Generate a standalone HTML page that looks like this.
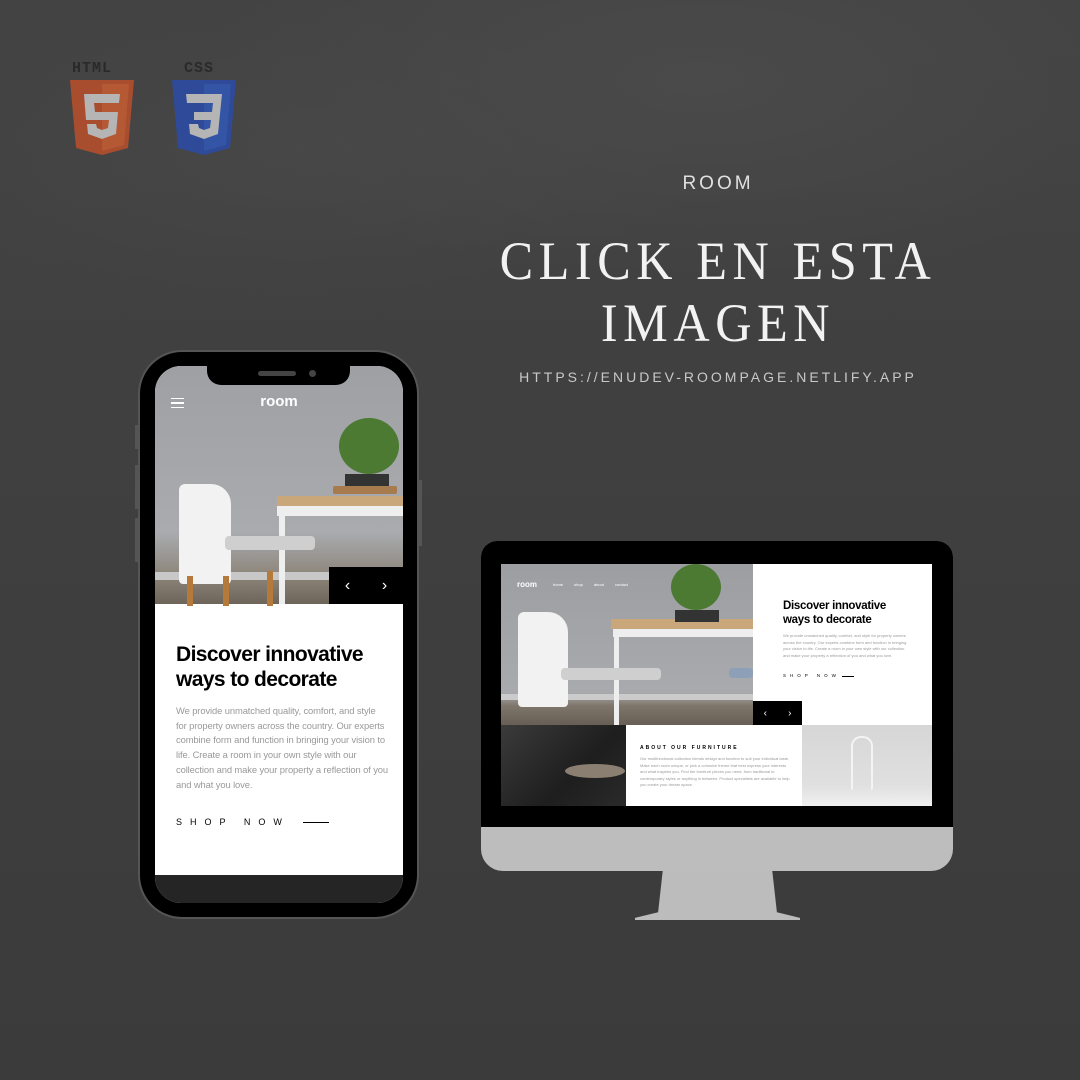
<!DOCTYPE html>
<html><head><meta charset="utf-8"><style>
*{margin:0;padding:0;box-sizing:border-box}
body{width:1080px;height:1080px;overflow:hidden;background:#3e3e3e;font-family:"Liberation Sans",sans-serif;position:relative}
.bg{position:absolute;inset:0;background:radial-gradient(ellipse 500px 200px at 700px 80px,#4a4a4a,transparent),radial-gradient(ellipse 400px 150px at 300px 150px,#474747,transparent),linear-gradient(#434343,#3b3b3b)}
.a{position:absolute}
.t{color:#eee;text-align:center;position:absolute}
</style></head><body>
<div class="bg"></div>
<!-- logos -->
<div class="a" style="left:72px;top:60px;font:bold 15px 'Liberation Mono',monospace;color:#2a2a2a;letter-spacing:1px">HTML</div>
<div class="a" style="left:184px;top:60px;font:bold 15px 'Liberation Mono',monospace;color:#2a2a2a;letter-spacing:1px">CSS</div>
<svg class="a" style="left:68px;top:78px" width="68" height="78" viewBox="0 0 68 78"><path d="M2 2H66L60 70 34 77 8 70Z" fill="#a84e2e"/><path d="M34 6H61L56 67 34 73Z" fill="#b55834"/><path d="M16 16H52L51 25H26L27 34H50L48 56 34 61 20 56 19 46H28L29 50 34 52 40 50 41 42H18Z" fill="#b5b5b5"/></svg>
<svg class="a" style="left:170px;top:78px" width="68" height="78" viewBox="0 0 68 78"><path d="M2 2H66L60 70 34 77 8 70Z" fill="#2f4a98"/><path d="M34 6H61L56 67 34 73Z" fill="#3454a5"/><path d="M16 16H52L48 56 34 61 20 56 19 46H28L29 50 34 52 40 50 41 42H24V34H42L43 25H17Z" fill="#b5b5b5"/></svg>
<!-- titles -->
<div class="t" style="left:540px;width:356px;top:173px;font-size:19px;letter-spacing:3px;color:#e0e0e0">ROOM</div>
<div class="t" style="left:440px;width:556px;top:230px;font:54px/62px 'Liberation Serif',serif;letter-spacing:6px;color:#f2f2f2;transform:scaleX(.93)">CLICK EN ESTA<br>IMAGEN</div>
<div class="t" style="left:440px;width:556px;top:369px;font-size:14px;letter-spacing:3px;color:#c8c8c8">HTTPS://ENUDEV-ROOMPAGE.NETLIFY.APP</div>
<!-- phone -->
<div class="a" style="left:138px;top:350px;width:281px;height:569px;background:#000;border-radius:44px;border:2px solid #555"></div>
<div class="a" style="left:135px;top:425px;width:4px;height:24px;background:#555"></div>
<div class="a" style="left:135px;top:465px;width:4px;height:44px;background:#555"></div>
<div class="a" style="left:135px;top:518px;width:4px;height:44px;background:#555"></div>
<div class="a" style="left:418px;top:480px;width:4px;height:66px;background:#555"></div>
<div class="a" style="left:155px;top:366px;width:248px;height:537px;border-radius:26px;overflow:hidden;background:#fff">
 <div class="a" style="left:0;top:0;width:248px;height:238px;background:linear-gradient(#9ea0a4,#a9abaf 70%,#8d857a 88%,#6d655a)"></div>
 <div class="a" style="left:0;top:206px;width:248px;height:8px;background:#c8c8c8"></div>
 <div class="a" style="left:122px;top:130px;width:126px;height:10px;background:#c9a77a"></div>
 <div class="a" style="left:122px;top:140px;width:126px;height:10px;background:#eee"></div>
 <div class="a" style="left:124px;top:150px;width:6px;height:88px;background:#eee"></div>
 <div class="a" style="left:190px;top:108px;width:44px;height:14px;background:#333"></div>
 <div class="a" style="left:178px;top:120px;width:64px;height:8px;background:#a77b4e;border-radius:2px"></div>
 <div class="a" style="left:184px;top:52px;width:60px;height:56px;background:#4c7a32;border-radius:50%"></div>
 <div class="a" style="left:24px;top:118px;width:52px;height:100px;background:#f2f2f2;border-radius:6px 20px 4px 4px"></div>
 <div class="a" style="left:70px;top:170px;width:90px;height:14px;background:#cfcfcf;border-radius:4px"></div>
 <div class="a" style="left:32px;top:210px;width:6px;height:30px;background:#b57a3a"></div>
 <div class="a" style="left:68px;top:210px;width:6px;height:30px;background:#b57a3a"></div>
 <div class="a" style="left:112px;top:205px;width:6px;height:35px;background:#b57a3a"></div>
 <div class="a" style="left:0;top:27px;width:248px;text-align:center;color:#fff;font-weight:bold;font-size:15px">room</div>
 <div class="a" style="left:16px;top:32px;width:13px;height:10px;border-top:1.5px solid #fff;border-bottom:1.5px solid #fff"></div>
 <div class="a" style="left:16px;top:36px;width:13px;height:1.5px;background:#fff"></div>
 <div class="a" style="left:174px;top:201px;width:74px;height:37px;background:#000;color:#fff;font-size:16px;display:flex;justify-content:space-around;align-items:center">‹<span>›</span></div>
 <div class="a" style="left:21px;top:276px;font-weight:bold;font-size:21px;line-height:25px;color:#000;letter-spacing:-.6px">Discover innovative<br>ways to decorate</div>
 <div class="a" style="left:21px;top:338px;width:212px;font-size:9.4px;line-height:14.7px;color:#999;letter-spacing:-.1px">We provide unmatched quality, comfort, and style for property owners across the country. Our experts combine form and function in bringing your vision to life. Create a room in your own style with our collection and make your property a reflection of you and what you love.</div>
 <div class="a" style="left:21px;top:451px;font-size:9px;letter-spacing:8px;color:#000">SHOP NOW</div>
 <div class="a" style="left:148px;top:456px;width:26px;height:1px;background:#000"></div>
 <div class="a" style="left:0;top:509px;width:248px;height:30px;background:#252525"></div>
</div>
<div class="a" style="left:207px;top:366px;width:143px;height:19px;background:#000;border-radius:0 0 14px 14px"></div>
<div class="a" style="left:258px;top:371px;width:38px;height:5px;background:#444;border-radius:3px"></div>
<div class="a" style="left:309px;top:370px;width:7px;height:7px;background:#444;border-radius:50%"></div>
<!-- monitor -->
<div class="a" style="left:635px;top:868px;width:165px;height:52px;background:#bcbcbc;clip-path:polygon(17% 0,83% 0,86% 85%,100% 96%,100% 100%,0 100%,0 96%,14% 85%)"></div>
<div class="a" style="left:481px;top:541px;width:472px;height:330px;background:#bdbdbd;border-radius:16px 16px 22px 22px;overflow:hidden">
 <div class="a" style="left:0;top:0;width:472px;height:286px;background:#000"></div>
</div>
<div class="a" style="left:501px;top:564px;width:431px;height:242px;background:#fff;overflow:hidden;font-family:'Liberation Sans',sans-serif">
 <div class="a" style="left:0;top:0;width:252px;height:161px;background:linear-gradient(#9c9ea2,#a8aaae 80%,#7f766b 88%,#675f55)"></div>
 <div class="a" style="left:0;top:130px;width:252px;height:6px;background:#cbcbcb"></div>
 <div class="a" style="left:110px;top:55px;width:142px;height:10px;background:#c9a77a"></div>
 <div class="a" style="left:112px;top:65px;width:140px;height:8px;background:#eee"></div>
 <div class="a" style="left:113px;top:70px;width:5px;height:91px;background:#eee"></div>
 <div class="a" style="left:170px;top:0;width:50px;height:46px;background:#4c7a32;border-radius:50%"></div>
 <div class="a" style="left:174px;top:46px;width:44px;height:12px;background:#333"></div>
 <div class="a" style="left:17px;top:48px;width:50px;height:95px;background:#f2f2f2;border-radius:6px 20px 4px 4px"></div>
 <div class="a" style="left:60px;top:104px;width:100px;height:12px;background:#cfcfcf;border-radius:4px"></div>
 <div class="a" style="left:228px;top:104px;width:24px;height:10px;background:#8ea0b8;border-radius:4px"></div>
 <div class="a" style="left:16px;top:16px;color:#fff;font-size:8px;font-weight:bold">room</div>
 <div class="a" style="left:52px;top:18px;color:#fff;font-size:4px;word-spacing:10px">home shop about contact</div>
 <div class="a" style="left:252px;top:137px;width:49px;height:24px;background:#000;color:#fff;font-size:10px;display:flex;justify-content:space-around;align-items:center">‹<span>›</span></div>
 <div class="a" style="left:282px;top:35px;font-weight:bold;font-size:11.5px;line-height:14px;color:#000;letter-spacing:-.3px">Discover innovative<br>ways to decorate</div>
 <div class="a" style="left:282px;top:69px;width:125px;font-size:4px;line-height:6.6px;color:#999">We provide unmatched quality, comfort, and style for property owners across the country. Our experts combine form and function in bringing your vision to life. Create a room in your own style with our collection and make your property a reflection of you and what you love.</div>
 <div class="a" style="left:282px;top:109px;font-size:4.5px;letter-spacing:4px;color:#000">SHOP NOW</div>
 <div class="a" style="left:341px;top:112px;width:12px;height:1px;background:#000"></div>
 <div class="a" style="left:0;top:161px;width:125px;height:81px;background:linear-gradient(135deg,#3b3b3b,#1e1e1e 60%,#2a2a2a)"></div>
 <div class="a" style="left:64px;top:200px;width:60px;height:14px;background:#8a7f70;border-radius:50%"></div>
 <div class="a" style="left:301px;top:161px;width:130px;height:81px;background:linear-gradient(#d6d6d6,#e0e0e0 75%,#f0f0f0)"></div>
 <div class="a" style="left:350px;top:172px;width:22px;height:54px;border:2px solid #f4f4f4;border-radius:10px 10px 2px 2px;border-bottom:none"></div>
 <div class="a" style="left:139px;top:181px;font-size:5px;font-weight:bold;letter-spacing:2px;color:#000">ABOUT OUR FURNITURE</div>
 <div class="a" style="left:139px;top:192px;width:150px;font-size:4px;line-height:6.6px;color:#999">Our multifunctional collection blends design and function to suit your individual taste. Make each room unique, or pick a cohesive theme that best express your interests and what inspires you. Find the furniture pieces you need, from traditional to contemporary styles or anything in between. Product specialists are available to help you create your dream space.</div>
</div>
</body></html>
